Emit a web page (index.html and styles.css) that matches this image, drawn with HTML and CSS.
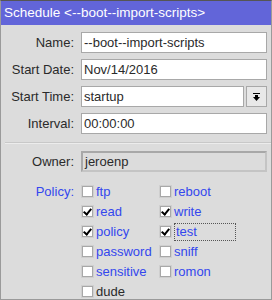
FILE: index.html
```html
<!DOCTYPE html>
<html lang="en">
<head>
  <meta charset="UTF-8">
  <title>Schedule</title>
  <link rel="stylesheet" href="styles.css">
</head>
<body>

<div class="window">
  <div class="title">Schedule &lt;--boot--import-scripts&gt;</div>

  <div class="form">
    <div class="label">Name:</div>
    <div class="field">--boot--import-scripts</div>

    <div class="label">Start Date:</div>
    <div class="field">Nov/14/2016</div>

    <div class="label">Start Time:</div>
    <div class="field-row">
      <div class="field">startup</div>
      <div class="drop-button">
        <svg width="9" height="10" viewBox="0 0 9 10">
          <rect x="1" y="1" width="7" height="1" fill="#000"/>
          <rect x="3" y="3" width="3" height="2" fill="#000"/>
          <polygon points="1,5 8,5 4.5,9" fill="#000"/>
        </svg>
      </div>
    </div>

    <div class="label">Interval:</div>
    <div class="field">00:00:00</div>
  </div>

  <div class="separator"></div>

  <div class="form">
    <div class="label">Owner:</div>
    <div class="field readonly">jeroenp</div>
  </div>

  <div class="policy">
    <div class="label blue">Policy:</div>
    <div class="checks">
      <div class="check"><span class="box"></span>ftp</div>
      <div class="check"><span class="box"></span>reboot</div>
      <div class="check"><span class="box on"></span>read</div>
      <div class="check"><span class="box on"></span>write</div>
      <div class="check"><span class="box on"></span>policy</div>
      <div class="check"><span class="box on"></span><span class="focus">test</span></div>
      <div class="check"><span class="box"></span>password</div>
      <div class="check"><span class="box"></span>sniff</div>
      <div class="check"><span class="box"></span>sensitive</div>
      <div class="check"><span class="box"></span>romon</div>
      <div class="check black"><span class="box"></span>dude</div>
    </div>
  </div>
</div>

</body>
</html>
```

FILE: styles.css
```css
body {
  margin: 0;
  font-family: 'Liberation Sans', Arial, sans-serif;
  font-size: 13px;
  color: #2a2a2a;
}

.window {
  width: 272px;
  height: 300px;
  box-sizing: border-box;
  background-color: #dcdcdc;
  border: 1px solid #9a9a9a;
  border-top-color: #555555;
  overflow: hidden;
}

.title {
  height: 24px;
  line-height: 24px;
  padding-left: 3px;
  background-color: #6265d9;
  color: white;
  font-size: 13.5px;
  white-space: nowrap;
}

.form {
  display: grid;
  grid-template-columns: 73px 1fr;
  column-gap: 7px;
  row-gap: 6px;
  padding: 7px 4px 0 0;
}

.label {
  text-align: right;
  line-height: 21px;
  white-space: nowrap;
}

.field {
  height: 21px;
  line-height: 19px;
  box-sizing: border-box;
  padding-left: 2px;
  background-color: white;
  border: 1px solid #a8a8a8;
  white-space: nowrap;
  overflow: hidden;
}

.field.readonly {
  background-color: #dcdcdc;
  border: 2px solid #c4c4c4;
  border-top-color: #a8a8a8;
  border-left-color: #a8a8a8;
  line-height: 17px;
}

.field-row {
  display: flex;
  gap: 2px;
}

.field-row .field {
  flex: 1;
}

.drop-button {
  width: 21px;
  height: 21px;
  box-sizing: border-box;
  border: 1px solid #a8a8a8;
  background-color: #e8e8e8;
  display: flex;
  align-items: center;
  justify-content: center;
}

.separator {
  margin: 8px 0 0 4px;
  height: 1px;
  background-color: #c8c8c8;
  border-bottom: 1px solid #ececec;
}

.policy {
  display: grid;
  grid-template-columns: 73px 1fr;
  column-gap: 7px;
  padding-top: 10px;
}

.policy .label {
  line-height: 19px;
}

.blue {
  color: #3347ee;
}

.checks {
  display: grid;
  grid-template-columns: 78px 1fr;
  grid-auto-rows: 20px;
  color: #3347ee;
}

.check {
  display: flex;
  align-items: center;
  gap: 2px;
  height: 19px;
  white-space: nowrap;
}

.check.black {
  color: #2a2a2a;
}

.box {
  width: 11px;
  height: 11px;
  box-sizing: border-box;
  background-color: white;
  border: 1px solid #a8a8a8;
  box-shadow: 0 0 0 1px #cfcfcf;
  margin: 0 1px;
  position: relative;
}

.box.on::after {
  content: '';
  position: absolute;
  left: 2px;
  top: 0px;
  width: 3px;
  height: 6px;
  border-right: 2px solid #000;
  border-bottom: 2px solid #000;
  transform: rotate(40deg);
}

.focus {
  display: inline-block;
  width: 59px;
  border: 1px dotted #555555;
  padding-left: 1px;
  line-height: 16px;
}
```
